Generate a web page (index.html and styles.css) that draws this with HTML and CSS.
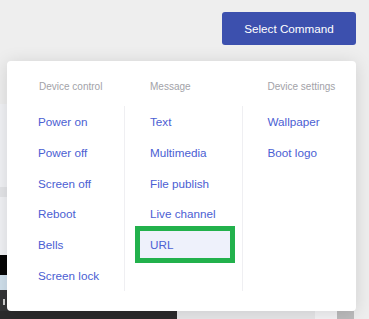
FILE: index.html
```html
<!DOCTYPE html>
<html lang="en">
<head>
    <meta charset="UTF-8">
    <meta name="viewport" content="width=device-width, initial-scale=1.0">
    <title>Select Command</title>
    <link rel="stylesheet" href="styles.css">
</head>
<body>
    <div class="toolbar">
        <div class="command-menu">
            <button type="button" class="command-btn">Select Command</button>

            <div class="dropdown">
                <div class="menu-col">
                    <div class="menu-title">Device control</div>
                    <div class="menu-list">
                        <a class="menu-item">Power on</a>
                        <a class="menu-item">Power off</a>
                        <a class="menu-item">Screen off</a>
                        <a class="menu-item">Reboot</a>
                        <a class="menu-item">Bells</a>
                        <a class="menu-item">Screen lock</a>
                    </div>
                </div>
                <div class="menu-col">
                    <div class="menu-title">Message</div>
                    <div class="menu-list divided">
                        <a class="menu-item">Text</a>
                        <a class="menu-item">Multimedia</a>
                        <a class="menu-item">File publish</a>
                        <a class="menu-item">Live channel</a>
                        <a class="menu-item active">URL</a>
                    </div>
                </div>
                <div class="menu-col">
                    <div class="menu-title">Device settings</div>
                    <div class="menu-list divided">
                        <a class="menu-item">Wallpaper</a>
                        <a class="menu-item">Boot logo</a>
                    </div>
                </div>
            </div>
        </div>
    </div>

    <div class="workspace">
        <div class="preview">
            <div class="strip light tall"></div>
            <div class="strip band"></div>
            <div class="strip light mid"></div>
            <div class="strip video"></div>
            <div class="strip sky"></div>
            <div class="strip controls"><span class="knob"></span></div>
            <div class="strip footer"></div>
        </div>
        <div class="side">
            <div class="side-block grey-a"></div>
            <div class="side-block grey-b"></div>
            <div class="side-block grey-c"></div>
        </div>
    </div>
</body>
</html>
```

FILE: styles.css
```css
body {
    margin: 0;
    background: #eeeeee;
    font-family: "Liberation Sans", Arial, sans-serif;
    overflow: hidden;
}

.toolbar {
    display: flex;
    justify-content: flex-end;
    padding: 12px 13px 0 0;
    height: 45px;
    box-sizing: border-box;
}

.command-menu {
    position: relative;
}

.command-btn {
    width: 134px;
    height: 33px;
    background-color: #3c50ae;
    color: #fff;
    border: none;
    border-radius: 3px;
    font-family: inherit;
    font-size: 11.7px;
    padding: 0;
    cursor: pointer;
}

/* dropdown panel */
.dropdown {
    position: absolute;
    top: 49px;
    right: 0;
    z-index: 10;
    width: 349px;
    box-sizing: border-box;
    padding: 18px 0 20px 6px;
    display: grid;
    grid-template-columns: 111px 117.5px 1fr;
    background: #fff;
    border-radius: 4px;
    box-shadow: 0 2px 18px rgba(0, 0, 0, 0.13);
}

.menu-title {
    padding-left: 26px;
    line-height: 16px;
    margin-bottom: 11px;
    font-size: 10px;
    color: #a2a2a8;
}

.menu-list {
    height: 185px;
    box-sizing: border-box;
    padding: 2px 0;
}

.menu-list.divided {
    border-left: 1px solid #efeff2;
}

.menu-item {
    display: block;
    height: 27px;
    line-height: 27px;
    margin: 0 12px 3.8px 15px;
    padding-left: 10px;
    font-size: 11.7px;
    color: #4b60d3;
    cursor: pointer;
}

.menu-item.active {
    background: #eef1fb;
    outline: 5px solid #22b14c;
}

/* page behind the dropdown */
.workspace {
    display: flex;
    margin-top: 59px;
}

.preview {
    width: 177px;
}

.strip.tall { height: 83px; }
.strip.mid { height: 58px; }
.strip.light { background: #f1f2f5; }
.strip.band { height: 10px; background: #e4e5e8; }
.strip.video { height: 20px; background: #050505; }
.strip.sky { height: 15px; background: #d0e0ec; }

.strip.controls {
    height: 21px;
    background: #333436;
    position: relative;
}

.knob {
    position: absolute;
    left: 3px;
    top: 9px;
    width: 2px;
    height: 6px;
    background: #cfcfcf;
}

.strip.footer { height: 8px; background: #2b2b2c; }

.side {
    flex: 1;
    display: flex;
    align-items: flex-end;
}

.side-block { height: 8px; }
.grey-a { width: 138px; background: #e8e8ea; }
.grey-b { width: 22px; background: #f4f4f6; }
.grey-c { width: 17px; background: #bcbcbd; }
```
